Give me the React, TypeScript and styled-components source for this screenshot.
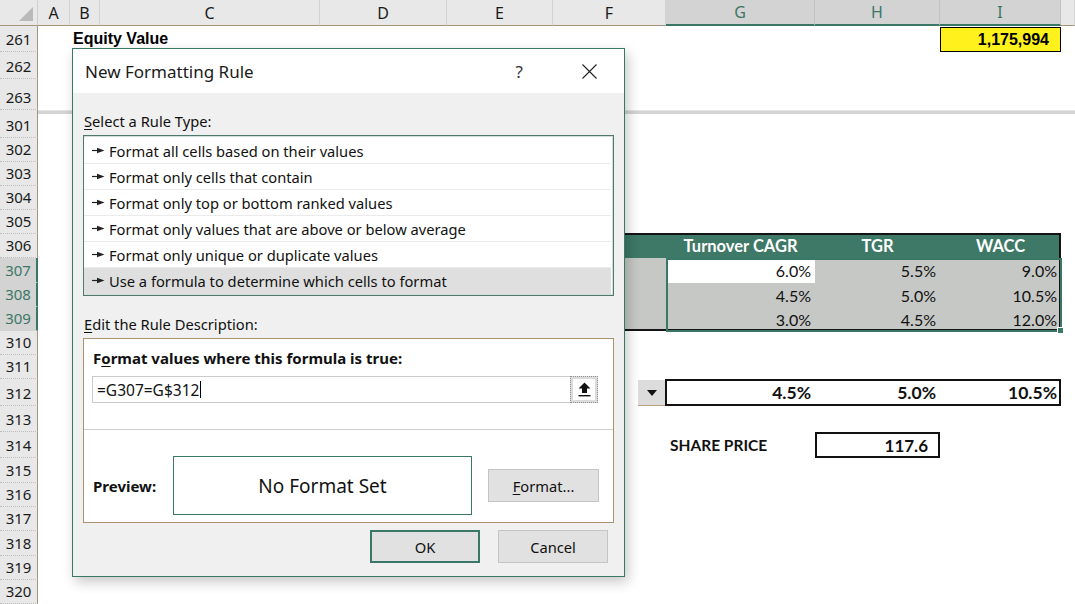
import React from 'react';
import styled, { createGlobalStyle, css } from 'styled-components';

const GREEN = '#3b7766';
const HEADER_BG = '#e8e8e8';
const HEADER_SEL = '#d3d3d3';
const HEADER_EDGE = '#a8947a';
const CELL_GREY = '#c6c8c5';

const GlobalStyle = createGlobalStyle`
  html, body {
    margin: 0;
    padding: 0;
    background: #ffffff;
    overflow: hidden;
  }
  body {
    font-family: 'Noto Sans', 'DejaVu Sans', sans-serif;
  }
`;

const LETTERS = ['A', 'B', 'C', 'D', 'E', 'F', 'G', 'H', 'I'];
const SELECTED_COLS = ['G', 'H', 'I'];
const SELECTED_ROWS = [307, 308, 309];

const ROW_H: [number, number][] = [
  [261, 26], [262, 27], [263, 31],
  [301, 24], [302, 24], [303, 24], [304, 24], [305, 24], [306, 24],
  [307, 25], [308, 24], [309, 24], [310, 24], [311, 24], [312, 27],
  [313, 26], [314, 26], [315, 25], [316, 24], [317, 24], [318, 25],
  [319, 24], [320, 24],
];

const TEMPLATE_ROWS = [
  '26px',
  ...ROW_H.slice(0, 3).map(([, h]) => `${h}px`),
  '4px',
  ...ROW_H.slice(3).map(([, h]) => `${h}px`),
].join(' ');

// grid index of a sheet row / column
const ri = (n: number) => (n <= 263 ? n - 259 : n - 295);
const ci = (l: string) => LETTERS.indexOf(l) + 2;

type Pos = { $c: number; $r: number; $cs?: number; $rs?: number };

const place = css<Pos>`
  grid-column: ${(p) => p.$c} / span ${(p) => p.$cs ?? 1};
  grid-row: ${(p) => p.$r} / span ${(p) => p.$rs ?? 1};
`;

const Sheet = styled.div`
  position: relative;
  width: 1075px;
  height: 604px;
  display: grid;
  grid-template-columns: 38px 32px 30px 220px 127px 106px 113px 149px 125px 121px 1fr;
  grid-template-rows: ${TEMPLATE_ROWS};
  overflow: hidden;
  background: #fff;
`;

const Corner = styled.div<Pos>`
  ${place};
  background: ${HEADER_BG};
  border-right: 1px solid #cfcfcf;
  border-bottom: 1px solid ${HEADER_EDGE};
  display: flex;
  align-items: flex-end;
  justify-content: flex-end;
  padding: 0 4px 4px 0;
`;

const ColHeader = styled.div<Pos & { $sel?: boolean }>`
  ${place};
  display: flex;
  align-items: center;
  justify-content: center;
  font-size: 16px;
  color: ${(p) => (p.$sel ? GREEN : '#1a1a1a')};
  background: ${(p) => (p.$sel ? HEADER_SEL : HEADER_BG)};
  border-right: 1px solid ${(p) => (p.$sel ? '#c2c2c2' : '#d2d2d2')};
  border-bottom: ${(p) => (p.$sel ? `2px solid ${GREEN}` : `1px solid ${HEADER_EDGE}`)};
`;

const RowHeader = styled.div<Pos & { $sel?: boolean }>`
  ${place};
  display: flex;
  align-items: flex-end;
  justify-content: center;
  padding-bottom: 2px;
  font-size: 15px;
  line-height: 20px;
  color: ${(p) => (p.$sel ? GREEN : '#1a1a1a')};
  background: ${(p) => (p.$sel ? HEADER_SEL : HEADER_BG)};
  border-right: ${(p) => (p.$sel ? `2px solid ${GREEN}` : `1px solid ${HEADER_EDGE}`)};
  border-bottom: 1px dotted ${(p) => (p.$sel ? HEADER_SEL : '#bdbdbd')};
`;

const SplitBar = styled.div<Pos>`
  ${place};
  background: #d4d4d4;
  border-top: 1px solid #e4e4e4;
`;

const SplitHeader = styled.div<Pos>`
  ${place};
  background: ${HEADER_BG};
  border-right: 1px solid ${HEADER_EDGE};
`;

const TitleCell = styled.div<Pos>`
  ${place};
  display: flex;
  align-items: center;
  padding-left: 3px;
  white-space: nowrap;
  font-family: 'Liberation Sans', Arial, sans-serif;
  font-weight: 700;
  font-size: 16px;
  color: #000;
`;

const TotalCell = styled.div<Pos>`
  ${place};
  display: flex;
  align-items: center;
  justify-content: flex-end;
  padding-right: 11px;
  margin-top: 1px;
  background: #fff21c;
  border: 1px solid #000;
  font-family: 'Liberation Sans', Arial, sans-serif;
  font-weight: 700;
  font-size: 16px;
  color: #000;
`;

const BandCell = styled.div<Pos>`
  ${place};
  display: flex;
  align-items: center;
  justify-content: center;
  background: #3e7866;
  color: #fff;
  font-family: Lato, 'Liberation Sans', sans-serif;
  font-weight: 700;
  font-size: 16.5px;
`;

const ValueCell = styled.div<Pos & { $fill?: string; $bold?: boolean }>`
  ${place};
  display: flex;
  align-items: center;
  justify-content: flex-end;
  padding-right: 4px;
  background: ${(p) => p.$fill ?? 'transparent'};
  font-family: Lato, 'Liberation Sans', sans-serif;
  font-weight: ${(p) => (p.$bold ? 700 : 400)};
  font-size: ${(p) => (p.$bold ? '17.5px' : '16px')};
  color: #111;
`;

const TableFrame = styled.div<Pos>`
  ${place};
  border: 2px solid #141414;
  margin-top: -1px;
  pointer-events: none;
`;

const SelectionFrame = styled.div<Pos>`
  ${place};
  position: relative;
  border: 2px solid ${GREEN};
  margin: 0 -1px -1px 0;
  pointer-events: none;
`;

const FillHandle = styled.div`
  position: absolute;
  right: -4px;
  bottom: -4px;
  width: 5px;
  height: 5px;
  background: ${GREEN};
  border: 1px solid #fff;
`;

const DropButton = styled.div<Pos>`
  ${place};
  justify-self: end;
  width: 27px;
  margin-top: 1px;
  background: #dcdcdc;
  border-right: 1px solid #b79e7c;
  border-bottom: 1px solid #b79e7c;
  display: flex;
  align-items: center;
  justify-content: center;
`;

const InputFrame = styled.div<Pos>`
  ${place};
  border: 2px solid #111;
  margin-left: -1px;
  pointer-events: none;
`;

const CaptionCell = styled.div<Pos>`
  ${place};
  display: flex;
  align-items: center;
  padding-left: 4px;
  white-space: nowrap;
  font-family: Lato, 'Liberation Sans', sans-serif;
  font-weight: 700;
  font-size: 15.5px;
  color: #111;
`;

const ResultCell = styled.div<Pos>`
  ${place};
  display: flex;
  align-items: center;
  justify-content: flex-end;
  padding-right: 10px;
  border: 2px solid #111;
  font-family: Lato, 'Liberation Sans', sans-serif;
  font-weight: 700;
  font-size: 17px;
  color: #111;
`;

/* ---------- dialog ---------- */

const Dialog = styled.div`
  position: absolute;
  left: 72px;
  top: 48px;
  width: 553px;
  height: 529px;
  box-sizing: border-box;
  border: 1px solid ${GREEN};
  background: #f0f0f0;
  box-shadow: 3px 5px 12px rgba(0, 0, 0, 0.22);
  display: flex;
  flex-direction: column;
  font-family: 'Noto Sans', 'DejaVu Sans', sans-serif;
  color: #111;
`;

const TitleBar = styled.div`
  height: 44px;
  flex-shrink: 0;
  background: #fff;
  display: flex;
  align-items: center;
  padding-left: 12px;
`;

const Title = styled.div`
  flex: 1;
  font-size: 17px;
  color: #1a1a1a;
`;

const Help = styled.span`
  font-size: 17px;
  color: #333;
  margin-right: 59px;
`;

const CloseIcon = styled.svg`
  margin-right: 27px;
`;

const Body = styled.div`
  flex: 1;
  display: flex;
  flex-direction: column;
  padding: 19px 10px 0 10px;
`;

const SectionLabel = styled.div<{ $gap?: number }>`
  font-size: 14.7px;
  line-height: 18px;
  margin-top: ${(p) => p.$gap ?? 0}px;
  margin-bottom: 5px;
  padding-left: 1px;
`;

const Key = styled.span`
  text-decoration: underline;
  text-underline-offset: 2px;
`;

const RuleList = styled.div`
  border: 1px solid #4f7a6b;
  box-shadow: inset 0 0 0 1px #d5ddd9;
  background: #fff;
  padding: 2px 2px 1px 0;
`;

const RuleItem = styled.div<{ $sel?: boolean }>`
  height: 26px;
  box-sizing: border-box;
  display: flex;
  align-items: center;
  gap: 4px;
  padding-left: 8px;
  font-size: 14.7px;
  background: ${(p) => (p.$sel ? '#dfdfdf' : '#fff')};
  border-bottom: 1px solid ${(p) => (p.$sel ? '#dfdfdf' : '#ebebeb')};
`;

const DescBox = styled.div`
  height: 185px;
  box-sizing: border-box;
  border: 1px solid #ab9172;
  background: #fff;
  display: flex;
  flex-direction: column;
`;

const FormulaLabel = styled.div`
  padding: 10px 0 0 9px;
  font-size: 15px;
  line-height: 18px;
  font-weight: 700;
`;

const FormulaRow = styled.div`
  display: flex;
  margin: 9px 15px 0 8px;
  height: 27px;
`;

const FormulaInput = styled.div`
  flex: 1;
  box-sizing: border-box;
  border: 1px solid #cacaca;
  border-right: none;
  display: flex;
  align-items: center;
  padding-left: 4px;
  font-size: 15.5px;
  color: #111;
`;

const Caret = styled.span`
  display: inline-block;
  width: 1px;
  height: 17px;
  background: #000;
  margin-left: 1px;
`;

const RefButton = styled.div`
  width: 28px;
  box-sizing: border-box;
  border: 1px dotted #8f8f8f;
  background: #dcdcdc;
  padding: 2px;
  display: flex;
`;

const RefButtonFace = styled.div`
  flex: 1;
  background: #fff;
  display: flex;
  align-items: center;
  justify-content: center;
`;

const Divider = styled.div`
  height: 1px;
  margin-top: 26px;
  background: #cfcfcf;
`;

const PreviewRow = styled.div`
  display: flex;
  align-items: center;
  margin-top: 26px;
  padding-left: 9px;
`;

const PreviewLabel = styled.div`
  width: 80px;
  font-size: 15px;
  font-weight: 700;
`;

const PreviewBox = styled.div`
  width: 299px;
  height: 59px;
  box-sizing: border-box;
  border: 1px solid ${GREEN};
  display: flex;
  align-items: center;
  justify-content: center;
  font-size: 19px;
  color: #111;
`;

const DialogButton = styled.div<{ $primary?: boolean }>`
  width: 110px;
  height: 33px;
  box-sizing: border-box;
  display: flex;
  align-items: center;
  justify-content: center;
  background: #e1e1e1;
  border: ${(p) => (p.$primary ? `2px solid ${GREEN}` : '1px solid #c4c4c4')};
  font-size: 14.7px;
  color: #111;
`;

const FormatButton = styled(DialogButton)`
  width: 111px;
  margin-left: 16px;
`;

const Footer = styled.div`
  display: flex;
  justify-content: flex-end;
  gap: 18px;
  margin: 7px 6px 0 0;
`;

const RULES = [
  'Format all cells based on their values',
  'Format only cells that contain',
  'Format only top or bottom ranked values',
  'Format only values that are above or below average',
  'Format only unique or duplicate values',
  'Use a formula to determine which cells to format',
];

const TABLE = [
  ['6.0%', '5.5%', '9.0%'],
  ['4.5%', '5.0%', '10.5%'],
  ['3.0%', '4.5%', '12.0%'],
];

const ArrowGlyph = () => (
  <svg width='13' height='7' viewBox='0 0 13 7'>
    <path d='M0 3.5 H6' stroke='#222' strokeWidth='1.2' />
    <path d='M5 0.8 L12.5 3.5 L5 6.2 Z' fill='#222' />
  </svg>
);

const App: React.FC = () => {
  return (
    <>
      <GlobalStyle />
      <Sheet>
        <Corner $c={1} $r={1}>
          <svg width='14' height='14' viewBox='0 0 14 14'>
            <path d='M14 0 L14 14 L0 14 Z' fill='#b9b9b9' />
          </svg>
        </Corner>
        {LETTERS.map((l) => (
          <ColHeader key={l} $c={ci(l)} $r={1} $sel={SELECTED_COLS.includes(l)}>
            {l}
          </ColHeader>
        ))}
        <ColHeader $c={11} $r={1} />

        {ROW_H.map(([n]) => (
          <RowHeader key={n} $c={1} $r={ri(n)} $sel={SELECTED_ROWS.includes(n)}>
            {n}
          </RowHeader>
        ))}
        <SplitHeader $c={1} $r={5} />
        <SplitBar $c={2} $r={5} $cs={10} />

        <TitleCell $c={ci('B')} $r={ri(261)} $cs={2}>
          Equity Value
        </TitleCell>
        <TotalCell $c={ci('I')} $r={ri(261)}>
          1,175,994
        </TotalCell>

        <BandCell $c={ci('F')} $r={ri(306)} />
        <BandCell $c={ci('G')} $r={ri(306)}>Turnover CAGR</BandCell>
        <BandCell $c={ci('H')} $r={ri(306)}>TGR</BandCell>
        <BandCell $c={ci('I')} $r={ri(306)}>WACC</BandCell>

        {TABLE.map((row, i) => (
          <React.Fragment key={i}>
            <ValueCell $c={ci('F')} $r={ri(307 + i)} $fill={CELL_GREY} />
            {row.map((v, j) => (
              <ValueCell
                key={j}
                $c={ci('G') + j}
                $r={ri(307 + i)}
                $fill={i === 0 && j === 0 ? '#ffffff' : CELL_GREY}
              >
                {v}
              </ValueCell>
            ))}
          </React.Fragment>
        ))}
        <TableFrame $c={ci('F')} $r={ri(306)} $cs={4} $rs={4} />
        <SelectionFrame $c={ci('G')} $r={ri(307)} $cs={3} $rs={3}>
          <FillHandle />
        </SelectionFrame>

        <DropButton $c={ci('F')} $r={ri(312)}>
          <svg width='10' height='6' viewBox='0 0 10 6'>
            <path d='M0 0 H10 L5 6 Z' fill='#111' />
          </svg>
        </DropButton>
        <ValueCell $c={ci('G')} $r={ri(312)} $bold>4.5%</ValueCell>
        <ValueCell $c={ci('H')} $r={ri(312)} $bold>5.0%</ValueCell>
        <ValueCell $c={ci('I')} $r={ri(312)} $bold>10.5%</ValueCell>
        <InputFrame $c={ci('G')} $r={ri(312)} $cs={3} />

        <CaptionCell $c={ci('G')} $r={ri(314)}>SHARE PRICE</CaptionCell>
        <ResultCell $c={ci('H')} $r={ri(314)}>117.6</ResultCell>

        <Dialog>
          <TitleBar>
            <Title>New Formatting Rule</Title>
            <Help>?</Help>
            <CloseIcon width='15' height='15' viewBox='0 0 15 15'>
              <path d='M0.5 0.5 L14.5 14.5 M14.5 0.5 L0.5 14.5' stroke='#222' strokeWidth='1.1' />
            </CloseIcon>
          </TitleBar>
          <Body>
            <SectionLabel>
              <Key>S</Key>elect a Rule Type:
            </SectionLabel>
            <RuleList>
              {RULES.map((r, i) => (
                <RuleItem key={r} $sel={i === RULES.length - 1}>
                  <ArrowGlyph />
                  {r}
                </RuleItem>
              ))}
            </RuleList>
            <SectionLabel $gap={19}>
              <Key>E</Key>dit the Rule Description:
            </SectionLabel>
            <DescBox>
              <FormulaLabel>
                F<Key>o</Key>rmat values where this formula is true:
              </FormulaLabel>
              <FormulaRow>
                <FormulaInput>
                  =G307=G$312
                  <Caret />
                </FormulaInput>
                <RefButton>
                  <RefButtonFace>
                    <svg width='13' height='15' viewBox='0 0 13 15'>
                      <path d='M6.5 0.5 L12.5 6.5 H9 V11 H4 V6.5 H0.5 Z' fill='#111' />
                      <rect x='0.5' y='13' width='12' height='1.4' fill='#111' />
                    </svg>
                  </RefButtonFace>
                </RefButton>
              </FormulaRow>
              <Divider />
              <PreviewRow>
                <PreviewLabel>Preview:</PreviewLabel>
                <PreviewBox>No Format Set</PreviewBox>
                <FormatButton>
                  <Key>F</Key>ormat...
                </FormatButton>
              </PreviewRow>
            </DescBox>
            <Footer>
              <DialogButton $primary>OK</DialogButton>
              <DialogButton>Cancel</DialogButton>
            </Footer>
          </Body>
        </Dialog>
      </Sheet>
    </>
  );
};

export default App;
